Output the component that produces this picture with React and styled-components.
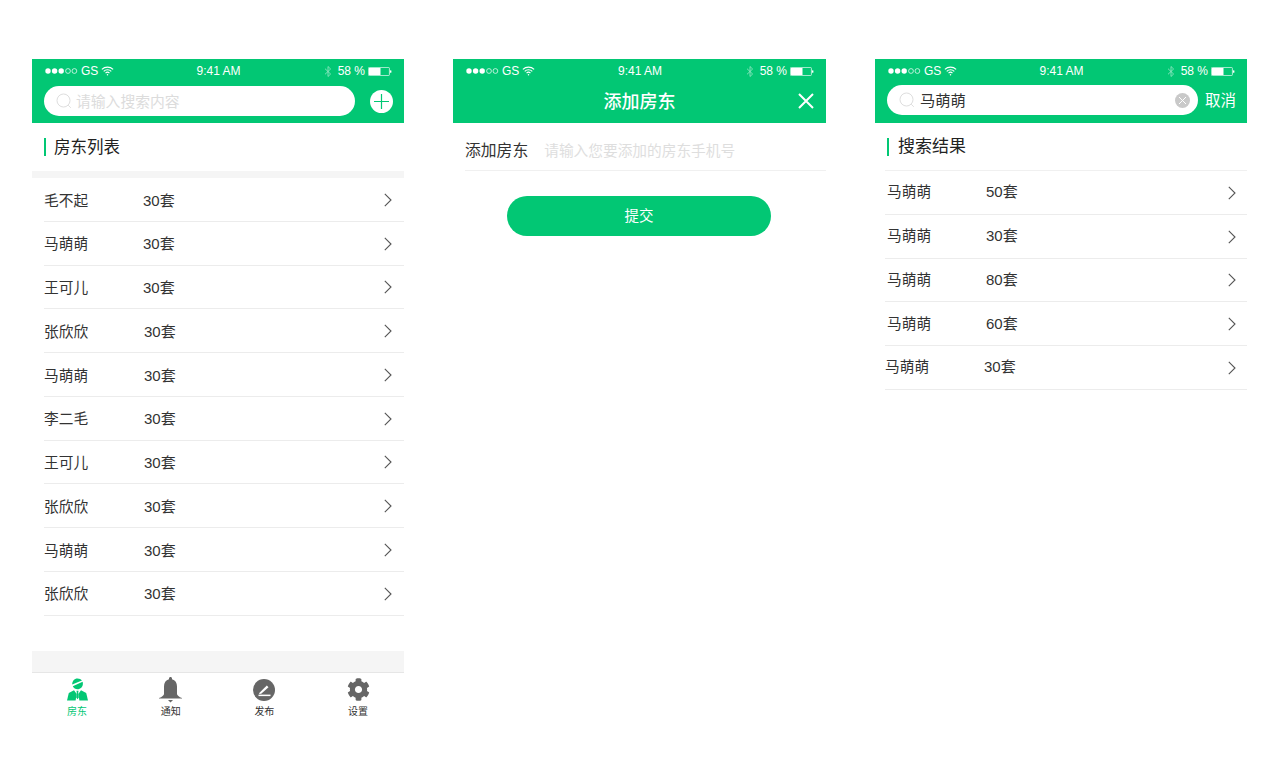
import React from "react";
import styled, { createGlobalStyle } from "styled-components";
import { FaCog } from "react-icons/fa";

const GREEN = "#02c774";
const FONT = `"Liberation Sans", "Noto Sans CJK SC", sans-serif`;

const GlobalStyle = createGlobalStyle`
  html, body {
    margin: 0;
    padding: 0;
    background: #fff;
    font-family: ${FONT};
  }
  * { box-sizing: border-box; }
`;

const Page = styled.div`
  width: 1280px;
  height: 780px;
  padding: 59px 33px 0 32px;
  display: flex;
  justify-content: space-between;
  align-items: flex-start;
`;

const Phone = styled.div`
  width: ${(p) => p.$width || 372}px;
  height: 666px;
  display: flex;
  flex-direction: column;
`;

const Header = styled.div`
  background: ${GREEN};
  height: 63.5px;
  color: #fff;
  flex-shrink: 0;
`;

const StatusBar = styled.div`
  height: 24px;
  padding: 0 12px 0 13px;
  display: grid;
  grid-template-columns: 1fr auto 1fr;
  align-items: center;
  font-size: 12px;
`;

const StatusLeft = styled.div`
  display: flex;
  align-items: center;
  gap: 3px;
`;

const StatusRight = styled.div`
  display: flex;
  align-items: center;
  justify-content: flex-end;
  gap: 3px;
`;

const BluetoothSlot = styled.span`
  display: flex;
  margin-right: 3px;
`;

const HeaderRow = styled.div`
  padding: ${(p) => p.$top}px 11px 0 12px;
  display: flex;
  align-items: center;
  justify-content: space-between;
`;

const SearchBox = styled.div`
  width: 311px;
  height: 30px;
  background: #fff;
  border-radius: 15px;
  padding: 0 8px 0 12px;
  display: flex;
  align-items: center;
  gap: 4px;
`;

const SearchText = styled.span`
  flex: 1;
  font-size: ${(p) => (p.$filled ? 15.3 : 14.8)}px;
  color: ${(p) => (p.$filled ? "#333" : "#dcdcdc")};
  white-space: nowrap;
  padding: 0 0 2px ${(p) => (p.$filled ? 1 : 0)}px;
`;

const PlusButton = styled.div`
  width: 23px;
  height: 23px;
  border-radius: 50%;
  background: #fff;
  display: flex;
  align-items: center;
  justify-content: center;
`;

const CancelLink = styled.span`
  font-size: 15.5px;
  color: #fff;
  white-space: nowrap;
  padding-bottom: 2px;
`;

const NavRow = styled.div`
  height: 36px;
  display: grid;
  grid-template-columns: 40px 1fr 40px;
  align-items: center;
  padding-bottom: 3px;
  text-align: center;
`;

const NavTitle = styled.div`
  font-size: 18px;
  font-weight: 500;
  grid-column: 2;
`;

const CloseButton = styled.div`
  display: flex;
  justify-content: flex-end;
  padding: 3px 12px 0 0;
`;

const SectionTitle = styled.div`
  height: ${(p) => p.$height}px;
  padding: ${(p) => p.$top}px 0 0 12px;
  flex-shrink: 0;
`;

const SectionLabel = styled.div`
  border-left: 2px solid ${GREEN};
  height: 18px;
  line-height: 18px;
  padding-left: ${(p) => p.$gap}px;
  font-size: ${(p) => p.$size}px;
  color: #222;
`;

const Band = styled.div`
  height: ${(p) => p.$height}px;
  background: #f5f5f5;
  flex-shrink: 0;
`;

const List = styled.div`
  margin-left: ${(p) => p.$left}px;
  flex: ${(p) => (p.$grow ? 1 : "none")};
  border-top: ${(p) => (p.$ruled ? "1px solid #f0f0f0" : "none")};
`;

const Row = styled.div`
  height: 43.75px;
  border-bottom: 1px solid #ececec;
  padding-left: ${(p) => p.$indent}px;
  padding-right: ${(p) => p.$right}px;
  display: flex;
  align-items: center;
  color: #333;
`;

const RowName = styled.span`
  width: ${(p) => p.$width}px;
  flex-shrink: 0;
  font-size: 14.7px;
  padding-bottom: ${(p) => p.$lift}px;
`;

const RowCount = styled.span`
  flex: 1;
  font-size: 15px;
  padding-bottom: ${(p) => p.$lift}px;
`;

const ChevronSlot = styled.span`
  display: flex;
  padding-top: 1px;
`;

const FormRow = styled.div`
  margin-left: 12px;
  height: 48px;
  padding-top: 6px;
  border-bottom: 1px solid #f0f0f0;
  display: flex;
  align-items: center;
  gap: 16px;
`;

const FormLabel = styled.span`
  font-size: 15.8px;
  color: #333;
  white-space: nowrap;
`;

const FormHint = styled.span`
  font-size: 14.7px;
  color: #dedede;
  white-space: nowrap;
`;

const SubmitButton = styled.button`
  display: block;
  width: 264px;
  height: 40px;
  margin: 25.5px 0 0 54px;
  border: none;
  border-radius: 20px;
  background: ${GREEN};
  color: #fff;
  font-family: ${FONT};
  font-size: 14.5px;
  padding: 0 0 3px;
`;

const TabBar = styled.div`
  height: 53px;
  border-top: 1px solid #e6e6e6;
  padding-left: 25px;
  display: flex;
  gap: 53.7px;
  flex-shrink: 0;
`;

const Tab = styled.div`
  width: 40px;
  display: flex;
  flex-direction: column;
  align-items: center;
  padding-top: 3px;
  color: ${(p) => (p.$active ? GREEN : "#333")};
  font-size: 10px;
`;

const TabIcon = styled.div`
  height: 27px;
  width: 28px;
  display: flex;
  align-items: center;
  justify-content: center;
  color: ${(p) => (p.$active ? GREEN : "#666")};
`;

const Signal = () => (
  <svg width="33" height="6" viewBox="0 0 33 6">
    {[3, 9.6, 16.2].map((x) => (
      <circle key={x} cx={x} cy="3" r="2.7" fill="#fff" />
    ))}
    {[23, 29.4].map((x) => (
      <circle key={x} cx={x} cy="3" r="2.4" fill="none" stroke="#fff" strokeWidth="0.7" />
    ))}
  </svg>
);

const Wifi = () => (
  <svg width="13" height="10" viewBox="0 0 12 9" fill="none" stroke="#fff" strokeWidth="1.1">
    <path d="M.8 3a7.6 7.6 0 0 1 10.4 0" />
    <path d="M2.5 4.8a5 5 0 0 1 7 0" />
    <path d="M4.2 6.5a2.6 2.6 0 0 1 3.6 0" />
    <circle cx="6" cy="8" r=".7" fill="#fff" stroke="none" />
  </svg>
);

const Bluetooth = () => (
  <svg width="8" height="13" viewBox="0 0 8 12" fill="none" stroke="#fff" strokeWidth="0.8" opacity="0.6">
    <path d="M1 3.2l5.6 5.3L4 11V1l2.6 2.5L1 8.8" />
  </svg>
);

const Battery = () => (
  <svg width="24" height="9" viewBox="0 0 24 9">
    <rect x=".4" y=".4" width="21" height="8.2" rx="1" fill="none" stroke="#fff" strokeWidth=".7" />
    <rect x="1" y="1" width="11.5" height="7" fill="#fff" />
    <rect x="22" y="3.2" width="1.4" height="2.6" rx=".6" fill="#fff" />
  </svg>
);

const Status = () => (
  <StatusBar>
    <StatusLeft>
      <Signal />
      <span>GS</span>
      <Wifi />
    </StatusLeft>
    <span>9:41 AM</span>
    <StatusRight>
      <BluetoothSlot>
        <Bluetooth />
      </BluetoothSlot>
      <span>58 %</span>
      <Battery />
    </StatusRight>
  </StatusBar>
);

const SearchIcon = () => (
  <svg width="16" height="16" viewBox="0 0 16 16" fill="none" stroke="#dedede" strokeWidth="1">
    <circle cx="7.5" cy="7.5" r="6.5" />
    <path d="M12.2 12.2l2.6 2.6" />
  </svg>
);

const ClearIcon = () => (
  <svg width="15" height="15" viewBox="0 0 15 15">
    <circle cx="7.5" cy="7.5" r="7.5" fill="#c9c9c9" />
    <path d="M4 4l7 7M11 4l-7 7" stroke="#fff" strokeWidth="1" />
  </svg>
);

const Chevron = () => (
  <ChevronSlot>
    <svg width="8" height="14" viewBox="0 0 8 14" fill="none" stroke="#555" strokeWidth="1.1">
      <path d="M.8.8L7 7 .8 13.2" />
    </svg>
  </ChevronSlot>
);

const PersonIcon = () => (
  <svg width="21" height="23" viewBox="0 0 21 23" fill="currentColor">
    <path d="M5.2 6.6C5 3 7.3.4 10.5.4c1.9 0 3.5.8 4.5 2.2L5.2 6.6z" />
    <path d="M15.6 3.8c.2.6.3 1.2.3 1.9 0 3-2.400 5.500-5.400 5.500-2 0-3.800-1.100-4.700-2.900l9.800-4.500z" />
    <path d="M7 12.200L1.800 15 0 22.600h8.600L9.700 16z" />
    <path d="M14 12.200l5.200 2.800 1.800 7.600h-8.600L11.300 16z" />
    <path d="M9.500 12.800h2l-.3 2 .6 4.800-1.300 1.600-1.300-1.600.6-4.800z" />
  </svg>
);

const BellIcon = () => (
  <svg width="23" height="26" viewBox="0 0 23 26" fill="currentColor">
    <path d="M11.500 0c.9 0 1.500.7 1.500 1.600v.7c3.300.8 5 3.600 5 7.200v7.500c0 1.300 2 3 5 4v.6H0V21c3-1 5-2.700 5-4V9.500c0-3.600 1.700-6.400 5-7.200v-.7C10 .7 10.600 0 11.500 0z" />
    <path d="M9 23h5l-2.500 2.400z" />
  </svg>
);

const PenIcon = () => (
  <svg width="22" height="22" viewBox="0 0 22 22">
    <circle cx="11" cy="11" r="11" fill="currentColor" />
    <path d="M6.500 13.800L13.800 6.500l1.700 1.700-7.300 6.600-2.200.3z" fill="#fff" />
    <rect x="5.500" y="15.600" width="12" height="1.500" fill="#fff" />
  </svg>
);

const Title = ({ top, height, gap, size, children }) => (
  <SectionTitle $top={top} $height={height}>
    <SectionLabel $gap={gap} $size={size}>
      {children}
    </SectionLabel>
  </SectionTitle>
);

const landlords = [
  ["毛不起", "30套", 99],
  ["马萌萌", "30套", 99],
  ["王可儿", "30套", 99],
  ["张欣欣", "30套", 100],
  ["马萌萌", "30套", 100],
  ["李二毛", "30套", 100],
  ["王可儿", "30套", 100],
  ["张欣欣", "30套", 100],
  ["马萌萌", "30套", 100],
  ["张欣欣", "30套", 100],
];

const results = [
  ["马萌萌", "50套", 2],
  ["马萌萌", "30套", 2],
  ["马萌萌", "80套", 2],
  ["马萌萌", "60套", 2],
  ["马萌萌", "30套", 0],
];

const tabs = [
  { label: "房东", icon: <PersonIcon />, active: true },
  { label: "通知", icon: <BellIcon /> },
  { label: "发布", icon: <PenIcon /> },
  { label: "设置", icon: <FaCog size={23} /> },
];

export default function App() {
  return (
    <Page>
      <GlobalStyle />
      <Phone>
        <Header>
          <Status />
          <HeaderRow $top={3}>
            <SearchBox>
              <SearchIcon />
              <SearchText>请输入搜索内容</SearchText>
            </SearchBox>
            <PlusButton>
              <svg width="15" height="15" viewBox="0 0 15 15" stroke={GREEN} strokeWidth="1.2">
                <path d="M7.500 0v15M0 7.500h15" />
              </svg>
            </PlusButton>
          </HeaderRow>
        </Header>
        <Title top={15.5} height={48.5} gap={8} size={16.5}>
          房东列表
        </Title>
        <Band $height={7} />
        <List $left={12} $grow>
          {landlords.map(([name, count, width], i) => (
            <Row key={i} $indent={0} $right={12}>
              <RowName $width={width} $lift={0.5}>{name}</RowName>
              <RowCount $lift={0.5}>{count}</RowCount>
              <Chevron />
            </Row>
          ))}
        </List>
        <Band $height={21} />
        <TabBar>
          {tabs.map((tab) => (
            <Tab key={tab.label} $active={tab.active}>
              <TabIcon $active={tab.active}>{tab.icon}</TabIcon>
              {tab.label}
            </Tab>
          ))}
        </TabBar>
      </Phone>

      <Phone $width={373}>
        <Header>
          <Status />
          <NavRow>
            <NavTitle>添加房东</NavTitle>
            <CloseButton>
              <svg width="16" height="16" viewBox="0 0 16 16" stroke="#fff" strokeWidth="2">
                <path d="M1 1l14 14M15 1L1 15" />
              </svg>
            </CloseButton>
          </NavRow>
        </Header>
        <FormRow>
          <FormLabel>添加房东</FormLabel>
          <FormHint>请输入您要添加的房东手机号</FormHint>
        </FormRow>
        <SubmitButton>提交</SubmitButton>
      </Phone>

      <Phone>
        <Header>
          <Status />
          <HeaderRow $top={2}>
            <SearchBox>
              <SearchIcon />
              <SearchText $filled>马萌萌</SearchText>
              <ClearIcon />
            </SearchBox>
            <CancelLink>取消</CancelLink>
          </HeaderRow>
        </Header>
        <Title top={15} height={47.5} gap={9} size={17}>
          搜索结果
        </Title>
        <List $left={10} $ruled>
          {results.map(([name, count, indent], i) => (
            <Row key={i} $indent={indent} $right={11}>
              <RowName $width={99} $lift={3}>{name}</RowName>
              <RowCount $lift={3}>{count}</RowCount>
              <Chevron />
            </Row>
          ))}
        </List>
      </Phone>
    </Page>
  );
}
